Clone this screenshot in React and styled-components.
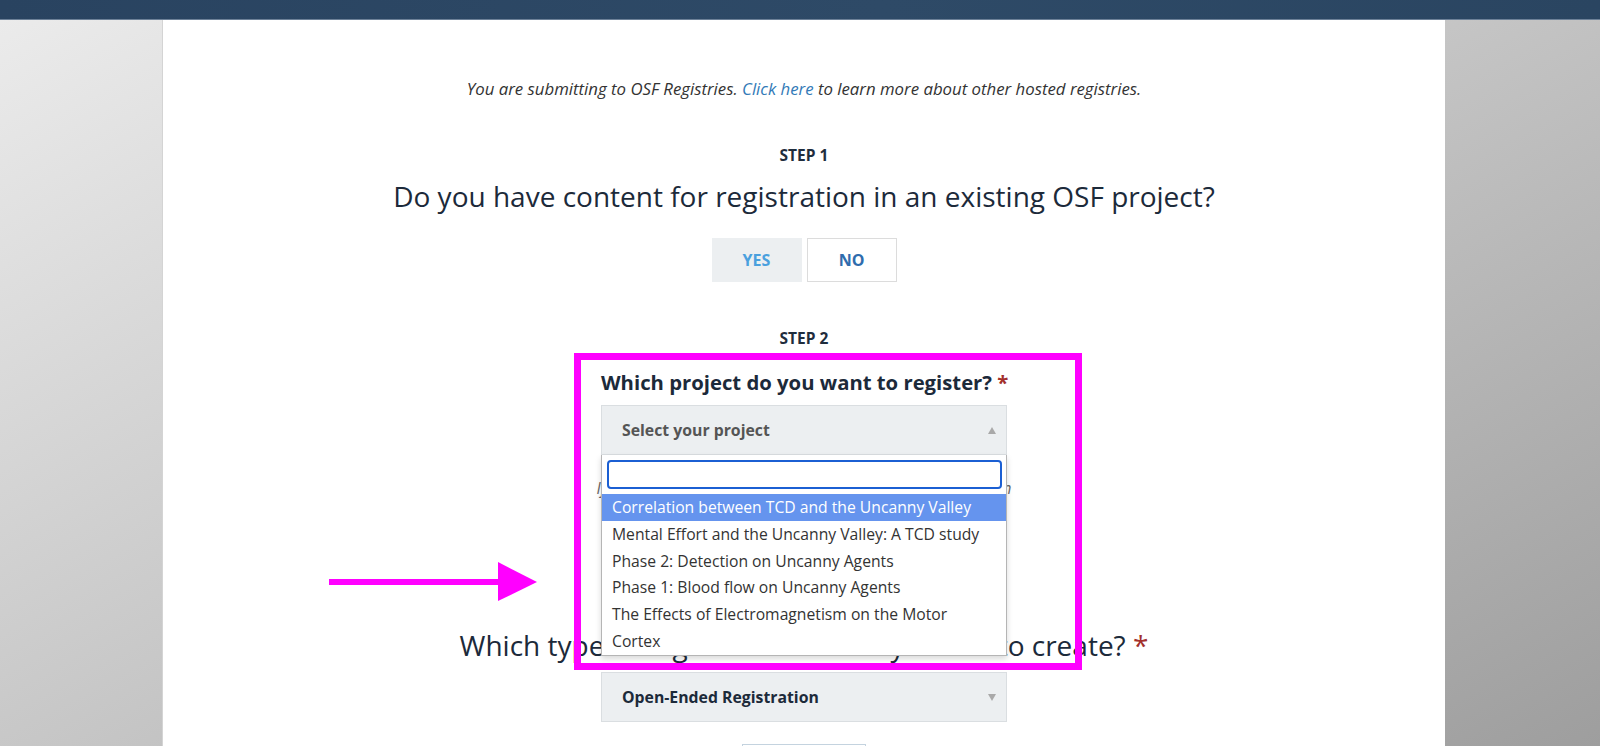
import React from 'react';
import styled, { createGlobalStyle } from 'styled-components';

const GlobalStyle = createGlobalStyle`
  html, body { margin: 0; padding: 0; }
  body {
    font-family: "Open Sans", "Noto Sans", sans-serif;
    background: linear-gradient(152deg, #ececec 0%, #9e9e9e 100%);
    overflow: hidden;
  }
  * { box-sizing: border-box; }
`;

const Page = styled.div`
  position: relative;
  height: 746px;
  display: flex;
  flex-direction: column;
  overflow: hidden;
`;

const TopBar = styled.header`
  flex: none;
  height: 20px;
  background: linear-gradient(90deg, #294360 0%, #2e4a67 55%, #2a4561 100%);
  border-bottom: 1px solid #6d8198;
`;

const Panel = styled.main`
  flex: 1;
  width: 1283px;
  margin-left: 162px;
  background: #fff;
  border-left: 1px solid #d4d4d4;
  display: flex;
  flex-direction: column;
  align-items: center;
`;

const Intro = styled.p`
  margin: 58px 0 0;
  font-size: 16.8px;
  line-height: 22px;
  font-style: italic;
  color: #333;
`;

const Link = styled.a`
  color: #337ab7;
  text-decoration: none;
`;

const StepLabel = styled.div`
  margin-top: ${(p) => p.$mt}px;
  font-size: 15.5px;
  line-height: 20px;
  font-weight: 700;
  color: #1f2d3d;
`;

const Heading = styled.h2`
  margin: ${(p) => p.$mt}px 0 0;
  font-size: 28px;
  line-height: 36px;
  font-weight: 400;
  color: #1c2a3a;
`;

const Required = styled.span`
  color: #a3302c;
`;

const ButtonRow = styled.div`
  display: flex;
  gap: 5px;
  margin-top: 24px;
`;

const ToggleButton = styled.button`
  width: 90px;
  height: 44px;
  font: inherit;
  font-size: 16px;
  font-weight: 700;
  background: ${(p) => (p.$active ? '#eceff1' : '#fff')};
  border: 1px solid ${(p) => (p.$active ? '#eceff1' : '#dcdcdc')};
  color: ${(p) => (p.$active ? '#4aa0de' : '#2f6cad')};
  cursor: pointer;
`;

const FormGroup = styled.div`
  width: 406px;
  margin-top: 19px;
  display: flex;
  flex-direction: column;
`;

const FieldLabel = styled.label`
  font-size: 20.3px;
  line-height: 30px;
  font-weight: 700;
  color: #1c2a3a;
  white-space: nowrap;
`;

const SelectWrap = styled.div`
  position: relative;
  width: 406px;
  margin-top: ${(p) => p.$mt}px;
`;

const SelectBox = styled.div`
  height: 50px;
  display: flex;
  align-items: center;
  padding: 0 20px;
  background: #eceff1;
  border: 1px solid #dadee1;
  font-size: 15.8px;
  font-weight: 700;
  color: ${(p) => (p.$placeholder ? '#555' : '#1c2a3a')};
  position: relative;
  &::after {
    content: '';
    position: absolute;
    right: 10px;
    top: 50%;
    margin-top: -3px;
    border-left: 4.5px solid transparent;
    border-right: 4.5px solid transparent;
    ${(p) =>
      p.$open
        ? 'border-bottom: 7px solid #a9a9a9;'
        : 'border-top: 7px solid #a9a9a9;'}
  }
`;

const Dropdown = styled.div`
  position: absolute;
  left: 0;
  top: 100%;
  width: 406px;
  background: #fff;
  border: 1px solid #b5b5b5;
  border-top: none;
  box-shadow: 0 3px 6px rgba(0, 0, 0, 0.15);
  z-index: 5;
`;

const SearchInput = styled.input`
  display: block;
  width: 395px;
  height: 29px;
  margin: 5px;
  border: 2px solid #1b5fd3;
  border-radius: 4px;
  outline: none;
  font: inherit;
  padding: 0 6px;
`;

const OptionList = styled.ul`
  list-style: none;
  margin: 0;
  padding: 0;
`;

const Option = styled.li`
  padding: 0 14px 0 10px;
  font-size: 15.7px;
  line-height: 26.8px;
  background: ${(p) => (p.$highlight ? '#6594ee' : 'transparent')};
  color: ${(p) => (p.$highlight ? '#fff' : '#333')};
`;

const HelpText = styled.p`
  margin: 23px 0 0;
  font-size: 15.5px;
  line-height: 20px;
  font-style: italic;
  color: #666;
  text-align: center;
`;

const ContinueButton = styled.button`
  margin-top: 22px;
  width: 124px;
  height: 40px;
  background: #fff;
  border: 1px solid #c4d3df;
  font: inherit;
  color: #2f6cad;
`;

const Highlight = styled.div`
  position: absolute;
  left: 574px;
  top: 353px;
  width: 508px;
  height: 317px;
  border: 7px solid #ff00ff;
  pointer-events: none;
  z-index: 10;
`;

const ArrowSvg = styled.svg`
  position: absolute;
  left: 325px;
  top: 558px;
  z-index: 10;
`;

const projects = [
  'Correlation between TCD and the Uncanny Valley',
  'Mental Effort and the Uncanny Valley: A TCD study',
  'Phase 2: Detection on Uncanny Agents',
  'Phase 1: Blood flow on Uncanny Agents',
  'The Effects of Electromagnetism on the Motor Cortex',
];

export default function App() {
  return (
    <>
      <GlobalStyle />
      <Page>
        <TopBar />
        <Panel>
          <Intro>
            You are submitting to OSF Registries. <Link href="#">Click here</Link> to learn more
            about other hosted registries.
          </Intro>

          <StepLabel $mt={45}>STEP 1</StepLabel>
          <Heading $mt={13}>Do you have content for registration in an existing OSF project?</Heading>
          <ButtonRow>
            <ToggleButton $active>YES</ToggleButton>
            <ToggleButton>NO</ToggleButton>
          </ButtonRow>

          <StepLabel $mt={46}>STEP 2</StepLabel>
          <FormGroup>
            <FieldLabel>
              Which project do you want to register? <Required>*</Required>
            </FieldLabel>
            <SelectWrap $mt={8}>
              <SelectBox $placeholder $open>
                Select your project
              </SelectBox>
              <Dropdown>
                <SearchInput type="text" />
                <OptionList>
                  {projects.map((p, i) => (
                    <Option key={p} $highlight={i === 0}>
                      {p}
                    </Option>
                  ))}
                </OptionList>
              </Dropdown>
            </SelectWrap>
          </FormGroup>
          <HelpText>If you don't see your project, type its title in the box to search</HelpText>

          <StepLabel $mt={97}>STEP 3</StepLabel>
          <Heading $mt={12}>
            Which type of registration would you like to create? <Required>*</Required>
          </Heading>
          <SelectWrap $mt={9}>
            <SelectBox>Open-Ended Registration</SelectBox>
          </SelectWrap>
          <ContinueButton>Continue</ContinueButton>
        </Panel>

        <Highlight />
        <ArrowSvg width="215" height="48" viewBox="0 0 215 48">
          <line x1="4" y1="24" x2="176" y2="24" stroke="#ff00ff" strokeWidth="6" />
          <polygon points="173,4 212,24 173,43" fill="#ff00ff" />
        </ArrowSvg>
      </Page>
    </>
  );
}
